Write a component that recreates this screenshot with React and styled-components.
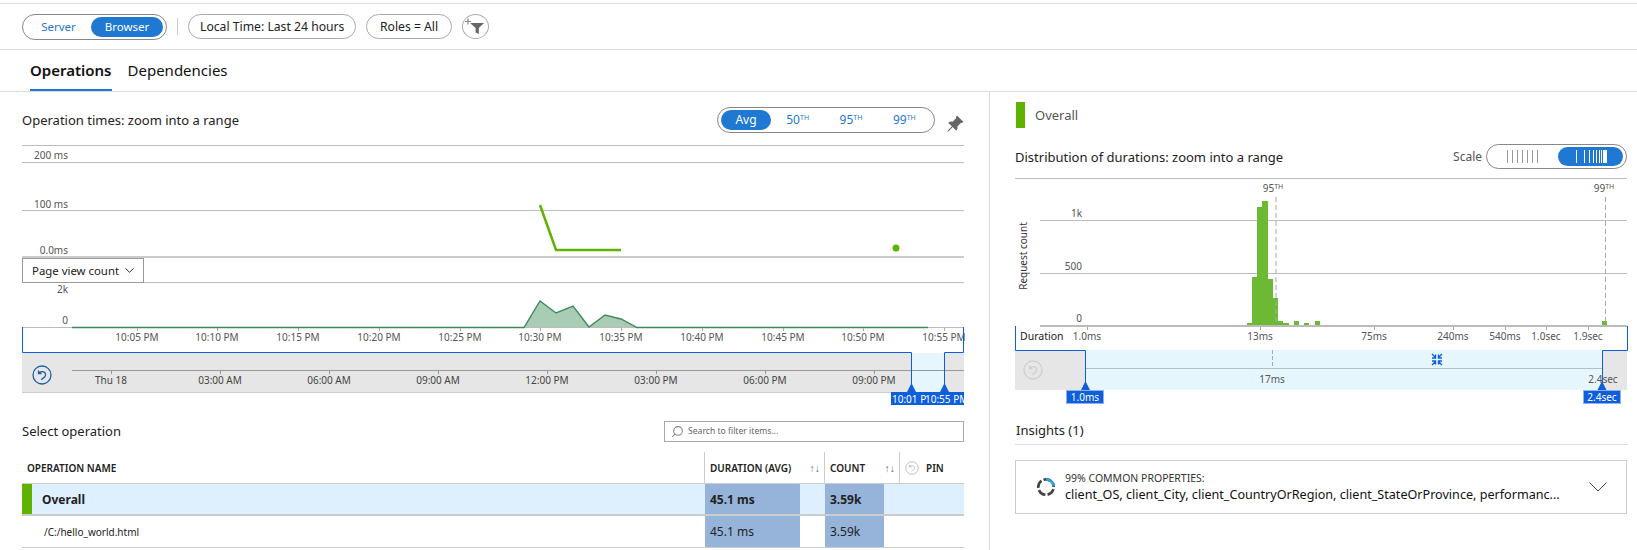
import React from "react";
import styled, { createGlobalStyle } from "styled-components";
import { BsPinAngleFill } from "react-icons/bs";
import { Search, ChevronDown } from "lucide-react";

const GlobalStyle = createGlobalStyle`
  html, body {
    margin: 0;
    padding: 0;
    background: #fff;
    font-family: "Noto Sans", "Open Sans", sans-serif;
    color: #222;
  }
  * { box-sizing: border-box; }
`;

const BLUE = "#1f78d1";
const LINE_BLUE = "#0f5fdc";
const GREEN = "#5fb200";
const GRID = "#bcbcbc";

const Page = styled.div`
  width: 1637px;
  height: 550px;
  overflow: hidden;
  padding-top: 3px;
`;

const Toolbar = styled.div`
  display: flex;
  align-items: flex-start;
  height: 47px;
  padding: 10px 22px 0;
  border-top: 1px solid #dcdcdc;
  border-bottom: 1px solid #dcdcdc;
`;

const Segment = styled.div`
  display: flex;
  align-items: center;
  width: 145px;
  height: 26px;
  padding: 0 3px;
  border: 1px solid #888;
  border-radius: 13px;
`;

const SegmentItem = styled.div`
  flex: ${(p) => (p.$active ? "0 0 72px" : "1")};
  height: 20px;
  line-height: 20px;
  text-align: center;
  font-size: 11.5px;
  border-radius: 10px;
  color: ${(p) => (p.$active ? "#fff" : BLUE)};
  background: ${(p) => (p.$active ? BLUE : "transparent")};
`;

const Divider = styled.div`
  width: 1px;
  height: 17px;
  margin: 4px 10px 0;
  background: #ccc;
`;

const FilterPill = styled.div`
  height: 25px;
  line-height: 23px;
  padding: 0 ${(p) => p.$pad || 11}px;
  margin-right: 10px;
  font-size: 12.2px;
  color: #222;
  border: 1px solid #aaa;
  border-radius: 13px;
  white-space: nowrap;
`;

const FilterButton = styled.div`
  display: flex;
  align-items: center;
  justify-content: center;
  width: 27px;
  height: 25px;
  border: 1px solid #aaa;
  border-radius: 50%;
`;

const TabBar = styled.div`
  display: flex;
  height: 42px;
  padding-left: 30px;
  border-bottom: 1px solid #dcdcdc;
`;

const Tab = styled.div`
  height: 41px;
  line-height: 41px;
  margin-right: 16px;
  font-size: 15px;
  font-weight: ${(p) => (p.$active ? 600 : 400)};
  color: #111;
  border-bottom: ${(p) => (p.$active ? `2px solid ${BLUE}` : "none")};
`;

const Main = styled.div`
  display: grid;
  grid-template-columns: 990px 1fr;
  height: 458px;
`;

const LeftPanel = styled.div`
  padding-left: 22px;
  width: 990px;
  padding-right: 25px;
  border-right: 1px solid #dcdcdc;
`;

const RightPanel = styled.div`
  padding-left: 25px;
  padding-right: 10px;
`;

const TitleRow = styled.div`
  display: flex;
  align-items: center;
  justify-content: space-between;
  height: 53px;
  padding-top: 3px;
`;

const Title = styled.div`
  font-size: 13px;
  color: #222;
  white-space: nowrap;
`;

const PercentileWrap = styled.div`
  display: flex;
  align-items: center;
  gap: 11px;
`;

const Percentiles = styled.div`
  display: flex;
  align-items: center;
  width: 218px;
  height: 26px;
  padding: 0 3px;
  border: 1px solid #888;
  border-radius: 13px;
`;

const PercentileItem = styled.div`
  flex: ${(p) => (p.$active ? "0 0 50px" : "1")};
  height: 20px;
  line-height: 20px;
  text-align: center;
  font-size: 12px;
  border-radius: 10px;
  color: ${(p) => (p.$active ? "#fff" : BLUE)};
  background: ${(p) => (p.$active ? BLUE : "transparent")};
  sup {
    font-size: 7px;
    line-height: 0;
    vertical-align: 4px;
  }
`;

const PinIcon = styled(BsPinAngleFill)`
  margin-top: 8px;
  color: #666;
`;

const Chart = styled.svg`
  display: block;
  overflow: visible;
`;

const Label = styled.text`
  font-family: "Noto Sans", "Open Sans", sans-serif;
  font-size: ${(p) => p.$size || 10}px;
  fill: ${(p) => p.$fill || "#555"};
`;

const DropdownRow = styled.div`
  height: 25px;
  border-bottom: 1px solid ${GRID};
`;

const Dropdown = styled.div`
  display: flex;
  align-items: center;
  justify-content: space-between;
  width: 122px;
  height: 25px;
  padding: 0 6px 0 9px;
  font-size: 11.4px;
  color: #222;
  white-space: nowrap;
  background: #fff;
  border: 1px solid #999;
`;

const SelectRow = styled.div`
  display: flex;
  align-items: center;
  justify-content: space-between;
  height: 22px;
  margin-top: 14px;
`;

const SearchBox = styled.div`
  display: flex;
  align-items: center;
  gap: 4px;
  width: 300px;
  height: 21px;
  padding-left: 6px;
  font-size: 8.6px;
  color: #666;
  border: 1px solid #aaa;
`;

const MirroredSearch = styled(Search)`
  transform: scaleX(-1);
  color: #888;
`;

const TableHead = styled.div`
  margin-top: 10px;
`;

const Grid = styled.div`
  display: grid;
  grid-template-columns: 682px 120px 75px 65px;
  width: 942px;
  height: ${(p) => p.$height}px;
  border-bottom: ${(p) => p.$rule || 1}px solid #ccc;
  background: ${(p) => p.$bg || "transparent"};
`;

const HeadCell = styled.div`
  display: flex;
  align-items: center;
  justify-content: space-between;
  padding: 0 4px 0 5px;
  font-size: 10px;
  font-weight: 600;
  color: #222;
  border-left: ${(p) => (p.$first ? "none" : "1px solid #ccc")};
`;

const HeadLeft = styled.span`
  display: flex;
  align-items: center;
  gap: 7px;
`;

const SortArrows = styled.span`
  font-size: 10.5px;
  font-weight: 400;
  color: #777;
`;

const NameCell = styled.div`
  display: flex;
  align-items: center;
  padding-left: ${(p) => (p.$swatch ? 10 : 22)}px;
  border-left: ${(p) => (p.$swatch ? `10px solid ${GREEN}` : "none")};
  font-size: ${(p) => (p.$swatch ? 12 : 10)}px;
  font-weight: ${(p) => (p.$swatch ? 700 : 400)};
  color: #222;
`;

const ValueCell = styled.div`
  padding-left: 1px;
`;

const ValueBar = styled.div`
  display: flex;
  align-items: center;
  width: ${(p) => p.$width}px;
  height: 100%;
  padding-left: 5px;
  font-size: 12px;
  font-weight: ${(p) => (p.$bold ? 700 : 400)};
  color: #222;
  background: #96b4d9;
`;

const Legend = styled.div`
  display: flex;
  align-items: center;
  gap: 10px;
  margin-top: 10px;
  margin-left: 1px;
  font-size: 13px;
  color: #555;
`;

const LegendSwatch = styled.div`
  width: 9px;
  height: 26px;
  background: ${GREEN};
`;

const DistRow = styled.div`
  display: flex;
  align-items: center;
  justify-content: space-between;
  height: 25px;
  margin-top: 16px;
  margin-bottom: 9px;
`;

const ScaleWrap = styled.div`
  display: flex;
  align-items: center;
  gap: 4px;
  margin-right: 1px;
  font-size: 12px;
  color: #555;
`;

const ScaleToggle = styled.div`
  display: flex;
  align-items: center;
  justify-content: space-between;
  width: 141px;
  height: 25px;
  padding: 0 3px 0 20px;
  border: 1px solid #888;
  border-radius: 13px;
`;

const ScaleActive = styled.div`
  display: flex;
  align-items: center;
  justify-content: center;
  width: 65px;
  height: 19px;
  border-radius: 10px;
  background: ${BLUE};
`;

const InsightsHead = styled.div`
  display: flex;
  align-items: center;
  height: 41px;
  padding: 11px 0 0 1px;
  font-size: 13px;
  color: #222;
  border-bottom: 1px solid #ddd;
`;

const InsightCard = styled.div`
  display: flex;
  align-items: center;
  width: 612px;
  height: 54px;
  margin-top: 15px;
  padding: 0 19px 0 20px;
  border: 1px solid #ccc;
`;

const InsightText = styled.div`
  flex: 1;
  margin-left: 9px;
`;

const InsightSmall = styled.div`
  font-size: 10.5px;
  line-height: 15px;
  color: #333;
`;

const InsightProps = styled.div`
  font-size: 12.6px;
  line-height: 18px;
  color: #111;
  white-space: nowrap;
`;

function ResetGlyph({ x, y, size = 20, color = "#1d5fa8" }) {
  return (
    <svg x={x} y={y} width={size} height={size} viewBox="0 0 20 20" fill="none" stroke={color}>
      <circle cx="10" cy="10" r="9" strokeWidth="1.3" />
      <path d="M6.5 5.5 L6.5 8.5 L9.5 8.5 M6.5 8.5 C8 5.6 13.5 6 13.6 9.6 C13.6 12 11.5 13.4 9.2 14.6" strokeWidth="1.3" />
    </svg>
  );
}

function FilterAddIcon() {
  return (
    <svg width="23" height="18" viewBox="0 0 23 18">
      <path d="M1 3.5h6M4 0.5v6" stroke="#888" strokeWidth="1.2" />
      <path d="M6 5h14l-5.2 5v6l-3.2-1.5V10z" fill="#666" />
    </svg>
  );
}

function ScaleTicks({ positions, color }) {
  return (
    <svg width="34" height="13" viewBox="0 0 34 13">
      {positions.map((x) => (
        <rect key={x} x={x} y="0" width="1" height="13" fill={color} />
      ))}
    </svg>
  );
}

const hourTicks = [
  [137, "10:05 PM"], [217, "10:10 PM"], [298, "10:15 PM"], [379, "10:20 PM"], [460, "10:25 PM"],
  [540, "10:30 PM"], [621, "10:35 PM"], [702, "10:40 PM"], [783, "10:45 PM"], [863, "10:50 PM"], [944, "10:55 PM"],
];

const dayTicks = [
  [111, "Thu 18"], [220, "03:00 AM"], [329, "06:00 AM"], [438, "09:00 AM"],
  [547, "12:00 PM"], [656, "03:00 PM"], [765, "06:00 PM"], [874, "09:00 PM"],
];

const durationTicks = [
  [1087, "1.0ms"], [1260, "13ms"], [1374, "75ms"], [1453, "240ms"], [1505, "540ms"], [1546, "1.0sec"], [1588, "1.9sec"],
];

// x, width, top of each histogram bin
const bins = [
  [1247, 5, 323], [1252, 5, 277], [1257, 5, 207], [1262, 6, 201], [1268, 5, 279], [1273, 5, 298],
  [1278, 5, 321], [1283, 6, 323], [1294, 5, 321], [1304, 5, 323], [1315, 5, 321], [1602, 5, 321],
];

function TimesChart() {
  return (
    <Chart width="943" height="113" viewBox="22 145 943 113">
      <path d="M22 145.5H964M22 162.5H964M22 210.5H964" stroke={GRID} />
      <path d="M22 257H964" stroke="#ccc" strokeWidth="2" />
      <Label x="68" y="159" textAnchor="end">200 ms</Label>
      <Label x="68" y="208" textAnchor="end">100 ms</Label>
      <Label x="68" y="254" textAnchor="end">0.0ms</Label>
      <path d="M540 205L556 250H621" fill="none" stroke={GREEN} strokeWidth="2.5" />
      <circle cx="896" cy="248" r="3.5" fill={GREEN} />
    </Chart>
  );
}

function CountChart() {
  return (
    <Chart width="943" height="123" viewBox="22 283 943 123">
      <Label x="68" y="293" textAnchor="end">2k</Label>
      <Label x="68" y="324" textAnchor="end">0</Label>
      <path d="M22 327.5H964" stroke={GRID} />
      <path d="M524 327L540 301L556 313L573 306L589 327L605 315L621 319L637 327Z" fill="#a9ccb5" />
      <path d="M72 327.5H524L540 301L556 313L573 306L589 327L605 315L621 319L637 327.5H928" fill="none" stroke="#3f8a5c" strokeWidth="1.4" />
      {hourTicks.map(([x, t]) => (
        <g key={t}>
          <path d={`M${x}.5 328V331`} stroke="#aaa" />
          <Label x={x} y="341" textAnchor="middle">{t}</Label>
        </g>
      ))}

      <rect x="22" y="353" width="942" height="40" fill="#e6e6e6" />
      <rect x="911" y="353" width="33" height="40" fill="#e6f6fd" />
      <path d="M22 392.5H964" stroke="#ccc" />
      <path d="M72 370.5H964" stroke="#999" />
      {dayTicks.map(([x, t]) => (
        <g key={t}>
          <path d={`M${x}.5 371V374`} stroke="#999" />
          <Label x={x} y="384" textAnchor="middle" $fill="#444">{t}</Label>
        </g>
      ))}
      <ResetGlyph x="32" y="365" />

      <path d="M22.5 327V352.5H911.5V388M944.5 388V352.5H963.5V327" fill="none" stroke={LINE_BLUE} />
      <path d="M907 392L911.5 383L916 392Z M940 392L944.5 383L949 392Z" fill={LINE_BLUE} />
      <rect x="891" y="392" width="73" height="13" fill={LINE_BLUE} />
      <Label x="892" y="402.5" $fill="#fff">10:01 P</Label>
      <Label x="925" y="402.5" $fill="#fff">10:55 PM</Label>
    </Chart>
  );
}

function DurationChart() {
  return (
    <Chart width="613" height="226" viewBox="1015 178 613 226">
      <path d="M1015 178.5H1627" stroke={GRID} />
      <path d="M1040 220.5H1627M1040 273.5H1627" stroke={GRID} />
      <path d="M1040 326H1627" stroke="#bbb" strokeWidth="2" />
      <Label x="1082" y="217" textAnchor="end">1k</Label>
      <Label x="1082" y="270" textAnchor="end">500</Label>
      <Label x="1082" y="322" textAnchor="end">0</Label>
      <Label x="1273" y="192" textAnchor="middle">95<tspan fontSize="7" dy="-3">TH</tspan></Label>
      <Label x="1604" y="192" textAnchor="middle">99<tspan fontSize="7" dy="-3">TH</tspan></Label>
      <Label transform="translate(1027 256) rotate(-90)" textAnchor="middle" $fill="#333">Request count</Label>

      {bins.map(([x, w, top]) => (
        <rect key={x} x={x} y={top} width={w} height={325 - top} fill="#6cb933" />
      ))}
      <path d="M1276 197V326M1605.5 197V326" stroke="#a9a9b5" strokeDasharray="5 3" />

      <Label x="1020" y="340" $fill="#222" $size="10.5">Duration</Label>
      {durationTicks.map(([x, t]) => (
        <g key={t}>
          <path d={`M${x}.5 327V330`} stroke="#aaa" />
          <Label x={x} y="340" textAnchor="middle">{t}</Label>
        </g>
      ))}

      <rect x="1015" y="350" width="612" height="40" fill="#e6e6e6" />
      <rect x="1085" y="350" width="517" height="40" fill="#e6f6fd" />
      <path d="M1085 368.5H1602" stroke="#b4bec6" />
      <path d="M1272.5 350V368" stroke="#a9a9b5" strokeDasharray="4 2" />
      <Label x="1272" y="383" textAnchor="middle">17ms</Label>
      <Label x="1603" y="383" textAnchor="middle">2.4sec</Label>
      <ResetGlyph x="1023" y="360" color="#cfcfcf" />

      <path d="M1432 354l3.5 3.5M1435.5 354.5v3.5h-3.5M1442 354l-3.5 3.5M1438.5 354.5v3.5h3.5M1432 365l3.5-3.5M1435.5 364.5v-3.5h-3.5M1442 365l-3.5-3.5M1438.5 364.5v-3.5h3.5" fill="none" stroke={LINE_BLUE} strokeWidth="1.4" />

      <path d="M1015.5 326V350.5H1085.5V386M1602.5 386V350.5H1627.5V326" fill="none" stroke={LINE_BLUE} />
      <path d="M1081 390L1085.5 381L1090 390Z M1597.5 390L1602 381L1606.5 390Z" fill={LINE_BLUE} />
      <rect x="1066.5" y="390.5" width="37" height="13" fill={LINE_BLUE} stroke="#8ab4f0" />
      <rect x="1583.5" y="390.5" width="37" height="13" fill={LINE_BLUE} stroke="#8ab4f0" />
      <Label x="1085" y="401" textAnchor="middle" $fill="#fff">1.0ms</Label>
      <Label x="1602" y="401" textAnchor="middle" $fill="#fff">2.4sec</Label>
    </Chart>
  );
}

function SpinnerIcon() {
  return (
    <svg width="20" height="20" viewBox="0 0 22 22" fill="none" strokeWidth="3">
      <circle cx="11" cy="11" r="8.5" stroke="#444" strokeDasharray="9 2.5 9 2.5 9 2.5" strokeDashoffset="-14" />
      <path d="M11 2.5A8.5 8.5 0 0 1 19.5 10" stroke="#2d9fd8" />
    </svg>
  );
}

export default function App() {
  return (
    <Page>
      <GlobalStyle />
      <Toolbar>
        <Segment>
          <SegmentItem>Server</SegmentItem>
          <SegmentItem $active>Browser</SegmentItem>
        </Segment>
        <Divider />
        <FilterPill>Local Time: Last 24 hours</FilterPill>
        <FilterPill $pad={12.5}>Roles = All</FilterPill>
        <FilterButton><FilterAddIcon /></FilterButton>
      </Toolbar>
      <TabBar>
        <Tab $active>Operations</Tab>
        <Tab>Dependencies</Tab>
      </TabBar>
      <Main>
        <LeftPanel>
          <TitleRow>
            <Title>Operation times: zoom into a range</Title>
            <PercentileWrap>
              <Percentiles>
                <PercentileItem $active>Avg</PercentileItem>
                <PercentileItem>50<sup>TH</sup></PercentileItem>
                <PercentileItem>95<sup>TH</sup></PercentileItem>
                <PercentileItem>99<sup>TH</sup></PercentileItem>
              </Percentiles>
              <PinIcon size={18} />
            </PercentileWrap>
          </TitleRow>
          <TimesChart />
          <DropdownRow>
            <Dropdown>Page view count <ChevronDown size={15} strokeWidth={1.5} /></Dropdown>
          </DropdownRow>
          <CountChart />
          <SelectRow>
            <Title>Select operation</Title>
            <SearchBox>
              <MirroredSearch size={13} />
              Search to filter items...
            </SearchBox>
          </SelectRow>
          <TableHead>
            <Grid $height={32}>
              <HeadCell $first>OPERATION NAME</HeadCell>
              <HeadCell>DURATION (AVG) <SortArrows>↑↓</SortArrows></HeadCell>
              <HeadCell>COUNT <SortArrows>↑↓</SortArrows></HeadCell>
              <HeadCell>
                <HeadLeft>
                  <svg width="14" height="14"><ResetGlyph x="0" y="0" size={14} color="#bbb" /></svg>
                  PIN
                </HeadLeft>
              </HeadCell>
            </Grid>
          </TableHead>
          <Grid $height={32} $rule={2} $bg="#deeffe">
            <NameCell $swatch>Overall</NameCell>
            <ValueCell><ValueBar $bold $width={95}>45.1 ms</ValueBar></ValueCell>
            <ValueCell><ValueBar $bold $width={59}>3.59k</ValueBar></ValueCell>
            <div />
          </Grid>
          <Grid $height={32}>
            <NameCell>/C:/hello_world.html</NameCell>
            <ValueCell><ValueBar $width={95}>45.1 ms</ValueBar></ValueCell>
            <ValueCell><ValueBar $width={59}>3.59k</ValueBar></ValueCell>
            <div />
          </Grid>
        </LeftPanel>
        <RightPanel>
          <Legend><LegendSwatch />Overall</Legend>
          <DistRow>
            <Title>Distribution of durations: zoom into a range</Title>
            <ScaleWrap>
              Scale
              <ScaleToggle>
                <ScaleTicks positions={[0, 5, 10, 15, 20, 25, 30]} color="#999" />
                <ScaleActive>
                  <ScaleTicks positions={[2, 10, 15, 19, 22, 25, 27, 29, 30, 31, 32]} color="#fff" />
                </ScaleActive>
              </ScaleToggle>
            </ScaleWrap>
          </DistRow>
          <DurationChart />
          <InsightsHead>Insights (1)</InsightsHead>
          <InsightCard>
            <SpinnerIcon />
            <InsightText>
              <InsightSmall>99% COMMON PROPERTIES:</InsightSmall>
              <InsightProps>client_OS, client_City, client_CountryOrRegion, client_StateOrProvince, performanc...</InsightProps>
            </InsightText>
            <svg width="18" height="10" viewBox="0 0 18 10" fill="none" stroke="#444"><path d="M0.5 0.5L9 9L17.5 0.5" /></svg>
          </InsightCard>
        </RightPanel>
      </Main>
    </Page>
  );
}
